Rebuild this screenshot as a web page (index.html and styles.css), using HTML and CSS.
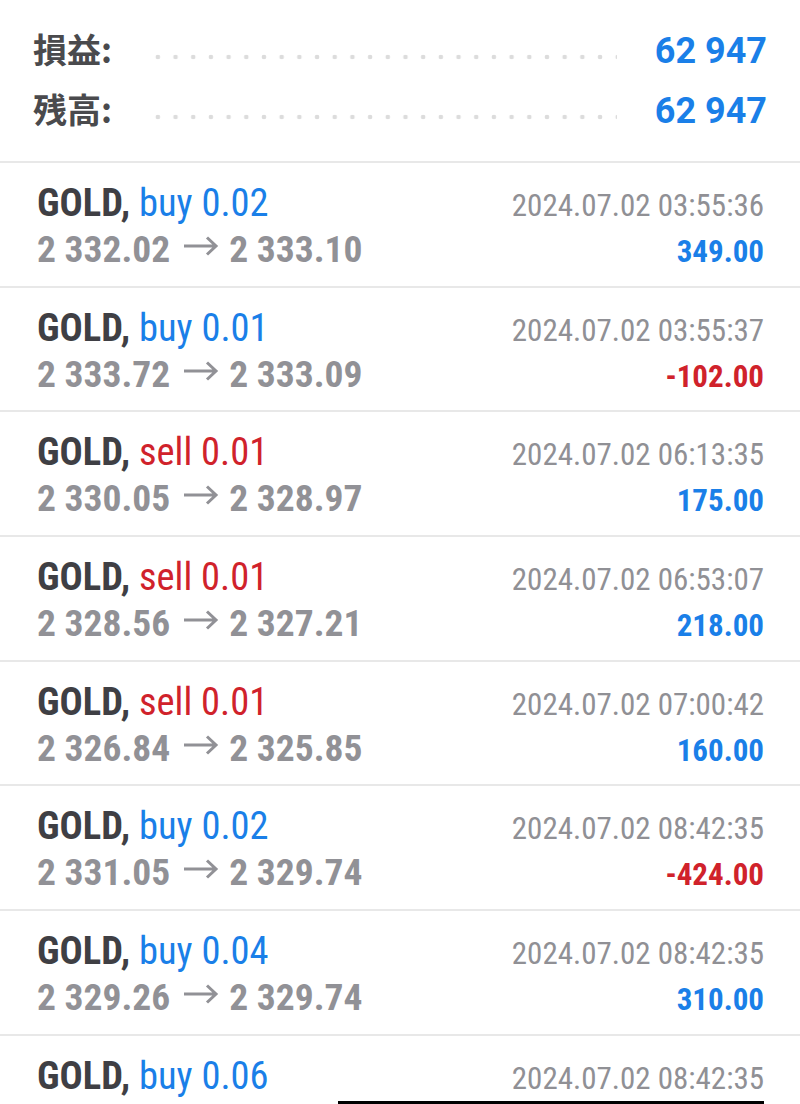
FILE: index.html
```html
<!DOCTYPE html>
<html lang="ja">
<head>
  <meta charset="UTF-8">
  <meta name="viewport" content="width=device-width, initial-scale=1.0">
  <title>履歴</title>
  <link rel="stylesheet" href="styles.css">
</head>
<body>

  <!-- Summary -->
  <div class="summary">
    <div class="summary-line">
      <span class="label">損益:</span>
      <span class="leader"></span>
      <span class="amount">62 947</span>
    </div>
    <div class="summary-line">
      <span class="label">残高:</span>
      <span class="leader"></span>
      <span class="amount">62 947</span>
    </div>
  </div>

  <!-- Deals -->
  <div class="deals">
    <div class="deal">
      <div class="deal-line">
        <span class="symbol">GOLD, <span class="buy">buy 0.02</span></span>
        <span class="time">2024.07.02 03:55:36</span>
      </div>
      <div class="deal-line">
        <span class="prices">2 332.02<svg class="arrow" viewBox="0 0 36 22"><path d="M1 11H33M24 2.5L33 11L24 19.5"/></svg>2 333.10</span>
        <span class="profit">349.00</span>
      </div>
    </div>

    <div class="deal">
      <div class="deal-line">
        <span class="symbol">GOLD, <span class="buy">buy 0.01</span></span>
        <span class="time">2024.07.02 03:55:37</span>
      </div>
      <div class="deal-line">
        <span class="prices">2 333.72<svg class="arrow" viewBox="0 0 36 22"><path d="M1 11H33M24 2.5L33 11L24 19.5"/></svg>2 333.09</span>
        <span class="profit loss">-102.00</span>
      </div>
    </div>

    <div class="deal">
      <div class="deal-line">
        <span class="symbol">GOLD, <span class="sell">sell 0.01</span></span>
        <span class="time">2024.07.02 06:13:35</span>
      </div>
      <div class="deal-line">
        <span class="prices">2 330.05<svg class="arrow" viewBox="0 0 36 22"><path d="M1 11H33M24 2.5L33 11L24 19.5"/></svg>2 328.97</span>
        <span class="profit">175.00</span>
      </div>
    </div>

    <div class="deal">
      <div class="deal-line">
        <span class="symbol">GOLD, <span class="sell">sell 0.01</span></span>
        <span class="time">2024.07.02 06:53:07</span>
      </div>
      <div class="deal-line">
        <span class="prices">2 328.56<svg class="arrow" viewBox="0 0 36 22"><path d="M1 11H33M24 2.5L33 11L24 19.5"/></svg>2 327.21</span>
        <span class="profit">218.00</span>
      </div>
    </div>

    <div class="deal">
      <div class="deal-line">
        <span class="symbol">GOLD, <span class="sell">sell 0.01</span></span>
        <span class="time">2024.07.02 07:00:42</span>
      </div>
      <div class="deal-line">
        <span class="prices">2 326.84<svg class="arrow" viewBox="0 0 36 22"><path d="M1 11H33M24 2.5L33 11L24 19.5"/></svg>2 325.85</span>
        <span class="profit">160.00</span>
      </div>
    </div>

    <div class="deal">
      <div class="deal-line">
        <span class="symbol">GOLD, <span class="buy">buy 0.02</span></span>
        <span class="time">2024.07.02 08:42:35</span>
      </div>
      <div class="deal-line">
        <span class="prices">2 331.05<svg class="arrow" viewBox="0 0 36 22"><path d="M1 11H33M24 2.5L33 11L24 19.5"/></svg>2 329.74</span>
        <span class="profit loss">-424.00</span>
      </div>
    </div>

    <div class="deal">
      <div class="deal-line">
        <span class="symbol">GOLD, <span class="buy">buy 0.04</span></span>
        <span class="time">2024.07.02 08:42:35</span>
      </div>
      <div class="deal-line">
        <span class="prices">2 329.26<svg class="arrow" viewBox="0 0 36 22"><path d="M1 11H33M24 2.5L33 11L24 19.5"/></svg>2 329.74</span>
        <span class="profit">310.00</span>
      </div>
    </div>

    <div class="deal">
      <div class="deal-line">
        <span class="symbol">GOLD, <span class="buy">buy 0.06</span></span>
        <span class="time">2024.07.02 08:42:35</span>
      </div>
      <div class="deal-line">
        <span class="prices">2 328.95<svg class="arrow" viewBox="0 0 36 22"><path d="M1 11H33M24 2.5L33 11L24 19.5"/></svg>2 329.74</span>
        <span class="profit">474.00</span>
      </div>
    </div>
  </div>

  <!-- nav bar edge at the bottom of the capture -->
  <div class="bottom-bar"></div>

</body>
</html>
```

FILE: styles.css
```css
body {
  margin: 0;
  background-color: #ffffff;
  font-family: "Roboto Condensed", Roboto, sans-serif;
  overflow: hidden;
}

.summary {
  padding: 19px 33px 22px 33px;
}

.summary-line {
  display: flex;
  align-items: baseline;
  height: 60px;
  line-height: 60px;
}

.label {
  font-family: "Noto Sans CJK JP", sans-serif;
  font-size: 34px;
  font-weight: 700;
  line-height: 60px;
  color: #4a4a4d;
}

.leader {
  flex: 1;
  align-self: stretch;
  margin: 0 38px 0 37px;
  background-image: radial-gradient(circle, #dcdcdc 2px, transparent 2.6px);
  background-size: 17.7px 6px;
  background-repeat: repeat-x;
  background-position: 0 calc(100% - 19px);
}

.amount {
  font-family: Roboto, sans-serif;
  font-size: 36px;
  font-weight: 700;
  line-height: 60px;
  color: #1a7fe8;
}

.deal {
  border-top: 2px solid #e8e8e8;
  padding: 17px 36px 12px 37px;
  height: 93.7px;
}

.deal-line {
  display: flex;
  justify-content: space-between;
  align-items: baseline;
  height: 46px;
  line-height: 46px;
}

.symbol {
  font-size: 38.5px;
  font-weight: 700;
  color: #3f3f44;
}

.buy,
.sell {
  font-weight: 400;
  color: #1a7fe8;
}

.sell {
  color: #d0222b;
}

.time {
  font-size: 31px;
  color: #909095;
}

.prices {
  font-size: 37.5px;
  font-weight: 700;
  color: #919196;
}

.arrow {
  width: 38px;
  height: 22px;
  margin: 0 9px 0 12px;
  vertical-align: 5px;
  fill: none;
  stroke: #919196;
  stroke-width: 3;
}

.profit {
  font-size: 31px;
  font-weight: 700;
  color: #1a7fe8;
}

.profit.loss {
  color: #d0222b;
}

.bottom-bar {
  position: fixed;
  left: 338px;
  bottom: 0;
  width: 426px;
  height: 3px;
  background-color: #000000;
}
```
